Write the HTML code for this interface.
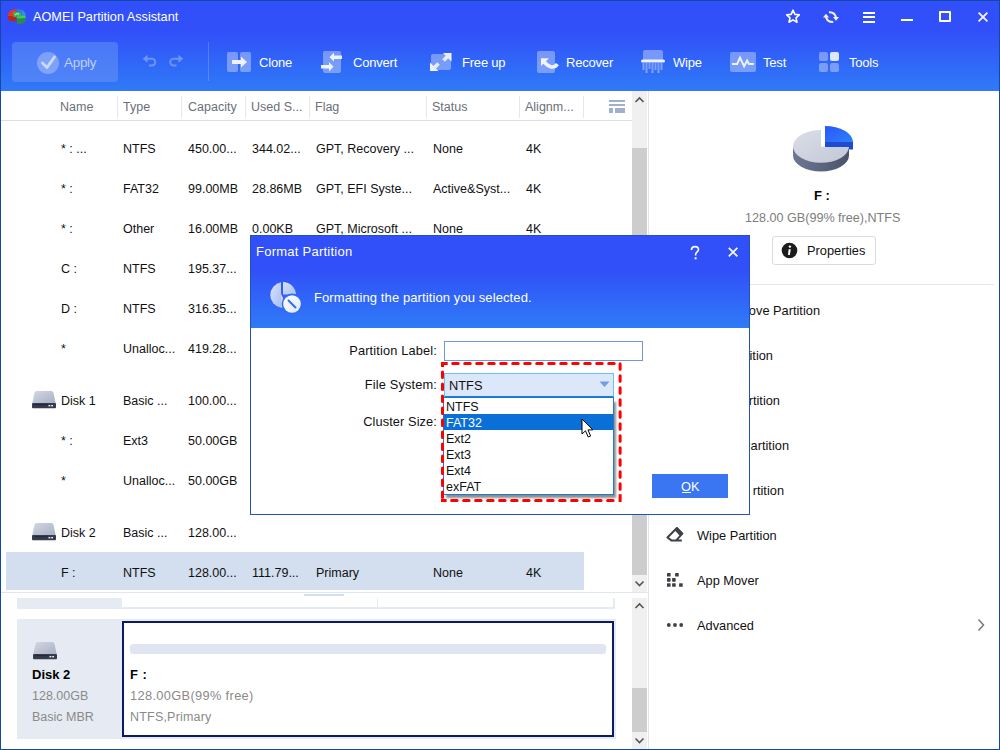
<!DOCTYPE html>
<html><head><meta charset="utf-8">
<style>
*{box-sizing:border-box;margin:0;padding:0}
html,body{width:1000px;height:750px;overflow:hidden;background:#fff}
body{font-family:"Liberation Sans",sans-serif;font-size:12px;color:#1a1a1a;position:relative}
.a{position:absolute;white-space:nowrap}
#win{position:absolute;left:0;top:0;width:1000px;height:750px;overflow:hidden}
#frame{position:absolute;left:0;top:0;width:1000px;height:750px;border:1px solid #1248a6;pointer-events:none}
#hdr{position:absolute;left:0;top:0;width:1000px;height:91px;background:linear-gradient(to bottom,#3150f9 0px,#3150f9 32px,#2f7bf7 91px)}
.tt{color:#fff;font-size:13px;letter-spacing:-0.2px}
.tbi{position:absolute}
.col{color:#6b6f7a;font-size:12.5px}
.cell{font-size:12.5px;color:#111}
.sep{position:absolute;top:96px;width:1px;height:22px;background:#e4e7ee}
</style></head>
<body>
<div id="win">
  <div id="hdr">
    <!-- app logo -->
    <svg class="a" style="left:6px;top:7px" width="22" height="20" viewBox="6 7 22 20">
      <path d="M16.5 9 C21 9 25.5 11 25.5 14.5 L25.5 19 L16.5 19 Z" fill="#2f7be2"/>
      <path d="M22 10 C24 11 25.5 12.5 25.5 14.5 L25.5 16 L22 16 Z" fill="#4a95ee" opacity="0.6"/>
      <path d="M16.5 9.2 C12 9.2 8 11.5 8 15 L8 17 L16.5 17 Z" fill="#e9342c"/>
      <path d="M8 16 L8 19.5 C9 21 12 21.6 16.5 21.2 L16.5 16 Z" fill="#b5281f"/>
      <path d="M17 16 L25.5 15.5 L25.5 21 C24 23.5 20 24.5 17 24.5 Z" fill="#2b8a4c"/>
      <path d="M17 16 L25.5 15.5 L25.5 18 L17 18.5 Z" fill="#3fcb5e"/>
      <path d="M13 12.3 L20.5 12.3 L21 16.5 L13.5 17 Z" fill="#2fbf50"/>
      <path d="M15 15 L17 13.5 L19 14.2" stroke="#d8f5dd" stroke-width="0.9" fill="none"/>
    </svg>
    <div class="a" style="left:33px;top:10px;color:#fff;font-size:12.7px;">AOMEI Partition Assistant</div>
    <!-- title bar icons -->
    <svg class="a" style="left:785px;top:9px" width="16" height="15" viewBox="0 0 16 15">
      <path d="M8 1.2 L9.9 5.4 L14.3 5.8 L11 8.8 L12 13.2 L8 10.9 L4 13.2 L5 8.8 L1.7 5.8 L6.1 5.4 Z" fill="none" stroke="#fff" stroke-width="1.6" stroke-linejoin="round"/>
    </svg>
    <svg class="a" style="left:822px;top:9px" width="18" height="16" viewBox="0 0 18 16">
      <path d="M7 3.2 Q12.8 2.8 14 8.5" fill="none" stroke="#f2f4fb" stroke-width="2"/>
      <path d="M11 8.5 Q5.2 13.2 4 8" fill="none" stroke="#f2f4fb" stroke-width="0"/>
      <path d="M11.2 13 Q5.2 13.2 4 8" fill="none" stroke="#f2f4fb" stroke-width="2"/>
      <path d="M11 8 L17 8 L14 11.8 Z" fill="#f2f4fb"/>
      <path d="M1 8.5 L7 8.5 L4 4.7 Z" fill="#f2f4fb"/>
    </svg>
    <div class="a" style="left:863px;top:11.5px;width:12px;height:2px;background:#fff"></div>
    <div class="a" style="left:863px;top:16px;width:12px;height:2px;background:#fff"></div>
    <div class="a" style="left:863px;top:20.5px;width:12px;height:2px;background:#fff"></div>
    <div class="a" style="left:901px;top:19px;width:12px;height:2px;background:#fff"></div>
    <div class="a" style="left:939px;top:11px;width:12px;height:11px;border:2px solid #fff;border-radius:1px"></div>
    <svg class="a" style="left:977px;top:11px" width="12" height="12" viewBox="0 0 12 12">
      <path d="M1.6 1.6 L10.4 10.4 M10.4 1.6 L1.6 10.4" stroke="#f4f6fc" stroke-width="1.8"/>
    </svg>
    <!-- Apply -->
    <div class="a" style="left:12px;top:42px;width:106px;height:40px;border-radius:4px;background:linear-gradient(#4a78f8,#4f84f7)"></div>
    <div class="a" style="left:37px;top:52px;width:22px;height:22px;border-radius:50%;background:rgba(255,255,255,0.28)"></div>
    <svg class="a" style="left:37px;top:52px" width="22" height="22" viewBox="0 0 22 22">
      <path d="M5.5 11 L10 15.5 L17.5 5" fill="none" stroke="#cad8fb" stroke-width="3" stroke-linecap="round" stroke-linejoin="round"/>
    </svg>
    <div class="a" style="left:64px;top:55px;color:#bfd0fa;font-size:13.5px;letter-spacing:-0.3px">Apply</div>
    <!-- undo/redo -->
    <svg class="a" style="left:141px;top:53px" width="18" height="16" viewBox="0 0 18 16">
      <path d="M6 5.8 L11 5.8 A3.3 3.3 0 0 1 11 12.4 L8 12.4" fill="none" stroke="#6b94f4" stroke-width="2"/>
      <path d="M1.6 5.8 L6.6 1.8 L6.6 9.8 Z" fill="#6b94f4"/>
    </svg>
    <svg class="a" style="left:167px;top:53px" width="18" height="16" viewBox="0 0 18 16">
      <path d="M12 5.8 L6.5 5.8 A3.3 3.3 0 0 0 6.5 12.4 L9.5 12.4" fill="none" stroke="#6b94f4" stroke-width="2"/>
      <path d="M16.2 5.8 L11.4 1.8 L11.4 9.8 Z" fill="#6b94f4"/>
    </svg>
    <div class="a" style="left:208px;top:42px;width:1px;height:39px;background:rgba(255,255,255,0.18)"></div>
    <!-- Clone -->
    <svg class="a" style="left:227px;top:52px" width="25" height="21" viewBox="0 0 25 21">
      <rect x="0" y="0" width="11" height="20" rx="2" fill="rgba(255,255,255,0.35)"/>
      <rect x="13" y="0" width="11" height="20" rx="2" fill="rgba(255,255,255,0.35)"/>
      <path d="M5 8 L14 8 L14 4.5 L20 10 L14 15.5 L14 12 L5 12 Z" fill="#eef2fc"/>
    </svg>
    <div class="a tt" style="left:259px;top:55px">Clone</div>
    <!-- Convert -->
    <svg class="a" style="left:321px;top:50px" width="22" height="24" viewBox="0 0 22 24">
      <rect x="2" y="1" width="18" height="22" rx="2" fill="rgba(255,255,255,0.35)"/>
      <path d="M21 5.5 L13 5.5 L13 2.5 L8.5 7.2 L13 11.5 L13 9 L21 9 Z" fill="#eef2fc"/>
      <path d="M0 15 L8 15 L8 12 L12.5 16.8 L8 21.5 L8 18.5 L0 18.5 Z" fill="#eef2fc"/>
    </svg>
    <div class="a tt" style="left:353px;top:55px">Convert</div>
    <!-- Free up -->
    <svg class="a" style="left:429px;top:52px" width="25" height="20" viewBox="0 0 25 20">
      <rect x="2" y="2" width="20" height="16" rx="2" fill="rgba(255,255,255,0.35)"/>
      <path d="M14 1 L22.5 1 L22.5 9.5 Z M1 19 L1 10.5 L9.5 19 Z" fill="#eef2fc"/>
      <path d="M20 3 L14.5 8.5 M4 17 L9.5 11.5" stroke="#e6ecfb" stroke-width="3.8"/>
    </svg>
    <div class="a tt" style="left:462px;top:55px">Free up</div>
    <!-- Recover -->
    <svg class="a" style="left:536px;top:50px" width="24" height="24" viewBox="0 0 24 24">
      <rect x="1" y="1" width="18" height="22" rx="2" fill="rgba(255,255,255,0.35)"/>
      <path d="M5 8.2 L13 8.2 L5 16 Z" fill="#f3f6fd"/><path d="M8 11.5 C11.5 16.5 17.5 19.5 21.5 14.2" fill="none" stroke="#eef2fc" stroke-width="3.6"/>
    </svg>
    <div class="a tt" style="left:566px;top:55px">Recover</div>
    <!-- Wipe -->
    <svg class="a" style="left:640px;top:49px" width="26" height="25" viewBox="0 0 26 25">
      <rect x="3" y="1" width="20" height="11" rx="2" fill="rgba(255,255,255,0.35)"/>
      <rect x="1" y="10.5" width="24" height="3" rx="1.5" fill="#eef2fc"/>
      <path d="M3.5 14 V21 M6.5 14 V24 M9.5 14 V20 M12.5 14 V24 M15.5 14 V21 M18.5 14 V24 M21.5 14 V21" stroke="rgba(255,255,255,0.38)" stroke-width="2"/>
    </svg>
    <div class="a tt" style="left:673px;top:55px">Wipe</div>
    <!-- Test -->
    <svg class="a" style="left:730px;top:52px" width="26" height="20" viewBox="0 0 26 20">
      <rect x="0" y="0" width="26" height="20" rx="2" fill="rgba(255,255,255,0.35)"/>
      <path d="M2 12 L7.2 12 L10 5.6 L14.1 14.2 L17.1 8.5 L19 12 L23.8 12" fill="none" stroke="#eef2fc" stroke-width="2"/>
    </svg>
    <div class="a tt" style="left:763px;top:55px">Test</div>
    <!-- Tools -->
    <svg class="a" style="left:819px;top:52px" width="21" height="21" viewBox="0 0 21 21">
      <rect x="0" y="0" width="9" height="9" rx="2" fill="rgba(255,255,255,0.35)"/>
      <rect x="11" y="0" width="9" height="9" rx="2" fill="#dfe6fb"/>
      <rect x="0" y="11" width="9" height="9" rx="2" fill="rgba(255,255,255,0.35)"/>
      <rect x="11" y="11" width="9" height="9" rx="2" fill="rgba(255,255,255,0.35)"/>
    </svg>
    <div class="a tt" style="left:849px;top:55px">Tools</div>
  </div>
  <!-- table header -->
  <div class="a col" style="left:60px;top:100px">Name</div>
  <div class="a col" style="left:123px;top:100px">Type</div>
  <div class="a col" style="left:188px;top:100px">Capacity</div>
  <div class="a col" style="left:251px;top:100px">Used S...</div>
  <div class="a col" style="left:315px;top:100px">Flag</div>
  <div class="a col" style="left:432px;top:100px">Status</div>
  <div class="a col" style="left:525px;top:100px">Alignm...</div>
  <div class="sep" style="left:117px"></div>
  <div class="sep" style="left:181px"></div>
  <div class="sep" style="left:245px"></div>
  <div class="sep" style="left:309px"></div>
  <div class="sep" style="left:426px"></div>
  <div class="sep" style="left:519px"></div>
  <div class="sep" style="left:583px"></div>
  <svg class="a" style="left:609px;top:100px" width="16" height="13" viewBox="0 0 16 13"><g fill="#a1afcb"><rect x="0" y="0" width="16" height="2"/><rect x="0" y="4" width="16" height="2"/><rect x="0" y="8" width="4" height="5"/><rect x="6" y="8" width="10" height="5"/></g></svg>
  <div class="a" style="left:1px;top:120px;width:631px;height:1px;background:#d9e0ec"></div>

<div class="a" style="left:6px;top:552px;width:578px;height:38px;background:#d3deee"></div>
<div class="a cell" style="left:61px;top:142px">* : ...</div>
<div class="a cell" style="left:123px;top:142px">NTFS</div>
<div class="a cell" style="left:188px;top:142px">450.00...</div>
<div class="a cell" style="left:252px;top:142px">344.02...</div>
<div class="a cell" style="left:316px;top:142px">GPT, Recovery ...</div>
<div class="a cell" style="left:433px;top:142px">None</div>
<div class="a cell" style="left:526px;top:142px">4K</div>
<div class="a cell" style="left:61px;top:182px">* :</div>
<div class="a cell" style="left:123px;top:182px">FAT32</div>
<div class="a cell" style="left:188px;top:182px">99.00MB</div>
<div class="a cell" style="left:252px;top:182px">28.86MB</div>
<div class="a cell" style="left:316px;top:182px">GPT, EFI Syste...</div>
<div class="a cell" style="left:433px;top:182px">Active&amp;Syst...</div>
<div class="a cell" style="left:526px;top:182px">4K</div>
<div class="a cell" style="left:61px;top:222px">* :</div>
<div class="a cell" style="left:123px;top:222px">Other</div>
<div class="a cell" style="left:188px;top:222px">16.00MB</div>
<div class="a cell" style="left:252px;top:222px">0.00KB</div>
<div class="a cell" style="left:316px;top:222px">GPT, Microsoft ...</div>
<div class="a cell" style="left:433px;top:222px">None</div>
<div class="a cell" style="left:526px;top:222px">4K</div>
<div class="a cell" style="left:61px;top:262px">C :</div>
<div class="a cell" style="left:123px;top:262px">NTFS</div>
<div class="a cell" style="left:188px;top:262px">195.37...</div>
<div class="a cell" style="left:61px;top:302px">D :</div>
<div class="a cell" style="left:123px;top:302px">NTFS</div>
<div class="a cell" style="left:188px;top:302px">316.35...</div>
<div class="a cell" style="left:61px;top:342px">*</div>
<div class="a cell" style="left:123px;top:342px">Unalloc...</div>
<div class="a cell" style="left:188px;top:342px">419.28...</div>
<div class="a cell" style="left:61px;top:394px">Disk 1</div>
<div class="a cell" style="left:123px;top:394px">Basic ...</div>
<div class="a cell" style="left:188px;top:394px">100.00...</div>
<svg class="a" style="left:32px;top:391px" width="24" height="18" viewBox="0 0 24 18"><defs><linearGradient id="dg400" x1="0" y1="0" x2="1" y2="1"><stop offset="0" stop-color="#d3d8e4"/><stop offset="1" stop-color="#a7afc2"/></linearGradient></defs><path d="M2.6 1.6 Q3 0 4.6 0 L19.4 0 Q21 0 21.4 1.6 L23.8 12.5 L0.2 12.5 Z" fill="url(#dg400)"/><rect x="0" y="12" width="24" height="5.2" rx="1" fill="#363b4e"/><rect x="2.5" y="13.2" width="13" height="1" fill="#22263a"/><rect x="16.5" y="14" width="1.8" height="1.4" fill="#e8ecf5"/><rect x="19.2" y="14" width="1.8" height="1.4" fill="#e8ecf5"/></svg>
<div class="a cell" style="left:61px;top:434px">* :</div>
<div class="a cell" style="left:123px;top:434px">Ext3</div>
<div class="a cell" style="left:188px;top:434px">50.00GB</div>
<div class="a cell" style="left:61px;top:474px">*</div>
<div class="a cell" style="left:123px;top:474px">Unalloc...</div>
<div class="a cell" style="left:188px;top:474px">50.00GB</div>
<div class="a cell" style="left:61px;top:526px">Disk 2</div>
<div class="a cell" style="left:123px;top:526px">Basic ...</div>
<div class="a cell" style="left:188px;top:526px">128.00...</div>
<svg class="a" style="left:32px;top:523px" width="24" height="18" viewBox="0 0 24 18"><defs><linearGradient id="dg532" x1="0" y1="0" x2="1" y2="1"><stop offset="0" stop-color="#d3d8e4"/><stop offset="1" stop-color="#a7afc2"/></linearGradient></defs><path d="M2.6 1.6 Q3 0 4.6 0 L19.4 0 Q21 0 21.4 1.6 L23.8 12.5 L0.2 12.5 Z" fill="url(#dg532)"/><rect x="0" y="12" width="24" height="5.2" rx="1" fill="#363b4e"/><rect x="2.5" y="13.2" width="13" height="1" fill="#22263a"/><rect x="16.5" y="14" width="1.8" height="1.4" fill="#e8ecf5"/><rect x="19.2" y="14" width="1.8" height="1.4" fill="#e8ecf5"/></svg>
<div class="a cell" style="left:61px;top:566px">F :</div>
<div class="a cell" style="left:123px;top:566px">NTFS</div>
<div class="a cell" style="left:188px;top:566px">128.00...</div>
<div class="a cell" style="left:252px;top:566px">111.79...</div>
<div class="a cell" style="left:316px;top:566px">Primary</div>
<div class="a cell" style="left:433px;top:566px">None</div>
<div class="a cell" style="left:526px;top:566px">4K</div>
  <!-- upper scrollbar -->
  <div class="a" style="left:632px;top:91px;width:15px;height:501px;background:#f0f0f0"></div>
  <svg class="a" style="left:632px;top:92px" width="15" height="16" viewBox="0 0 15 16"><path d="M3.5 10 L7.5 6 L11.5 10" fill="none" stroke="#555" stroke-width="1.6"/></svg>
  <div class="a" style="left:632px;top:148px;width:15px;height:427px;background:#cdcdcd"></div>
  <svg class="a" style="left:632px;top:575px" width="15" height="17" viewBox="0 0 15 17"><path d="M3.5 6.5 L7.5 10.5 L11.5 6.5" fill="none" stroke="#555" stroke-width="1.6"/></svg>
  <div class="a" style="left:648px;top:91px;width:1px;height:659px;background:#dfe6f0"></div>
  <div class="a" style="left:1px;top:592px;width:647px;height:1px;background:#dfe6f0"></div>
  <!-- lower pane -->
  <div class="a" style="left:304px;top:594px;width:40px;height:2px;background:#d5e0ee"></div>
  <div class="a" style="left:17px;top:598px;width:105px;height:11px;background:#e6eaf2"></div>
  <div class="a" style="left:122px;top:607px;width:493px;height:2px;background:#e6eaf2"></div>
  <div class="a" style="left:377px;top:598px;width:1px;height:10px;background:#e6eaf2"></div>
  <div class="a" style="left:613px;top:598px;width:2px;height:10px;background:#e6eaf2"></div>
  <div class="a" style="left:632px;top:598px;width:15px;height:151px;background:#f0f0f0"></div>
  <svg class="a" style="left:632px;top:598px" width="15" height="16" viewBox="0 0 15 16"><path d="M3.5 10 L7.5 6 L11.5 10" fill="none" stroke="#555" stroke-width="1.6"/></svg>
  <div class="a" style="left:632px;top:688px;width:15px;height:44px;background:#cdcdcd"></div>
  <svg class="a" style="left:632px;top:732px" width="15" height="17" viewBox="0 0 15 17"><path d="M3.5 6.5 L7.5 10.5 L11.5 6.5" fill="none" stroke="#555" stroke-width="1.6"/></svg>
  <div class="a" style="left:17px;top:619px;width:599px;height:120px;background:#e6eaf2"></div>
  <div class="a" style="left:122px;top:621px;width:492px;height:116px;background:#fff;border:2px solid #0c1a66"></div>
  <div class="a" style="left:130px;top:644px;width:476px;height:10px;background:#dfe6f1;border-radius:3px"></div>
  <svg class="a" style="left:33px;top:642px" width="24" height="18" viewBox="0 0 24 18"><defs><linearGradient id="dgl" x1="0" y1="0" x2="1" y2="1"><stop offset="0" stop-color="#d3d8e4"/><stop offset="1" stop-color="#a7afc2"/></linearGradient></defs><path d="M2.6 1.6 Q3 0 4.6 0 L19.4 0 Q21 0 21.4 1.6 L23.8 12.5 L0.2 12.5 Z" fill="url(#dgl)"/><rect x="0" y="12" width="24" height="5.2" rx="1" fill="#363b4e"/><rect x="2.5" y="13.2" width="13" height="1" fill="#22263a"/><rect x="16.5" y="14" width="1.8" height="1.4" fill="#e8ecf5"/><rect x="19.2" y="14" width="1.8" height="1.4" fill="#e8ecf5"/></svg>
  <div class="a" style="left:32px;top:667px;font-size:13px;font-weight:bold;color:#000">Disk 2</div>
  <div class="a" style="left:32px;top:689px;font-size:12.5px;color:#8a8a8a">128.00GB</div>
  <div class="a" style="left:32px;top:710px;font-size:12.5px;color:#8a8a8a">Basic MBR</div>
  <div class="a" style="left:130px;top:667px;font-size:13px;font-weight:bold;color:#000;word-spacing:1px">F :</div>
  <div class="a" style="left:130px;top:688px;font-size:12.8px;color:#8a8a8a;letter-spacing:0.35px">128.00GB(99% free)</div>
  <div class="a" style="left:130px;top:710px;font-size:12.5px;color:#8a8a8a;letter-spacing:0.2px">NTFS,Primary</div>
  <!-- right panel -->
  <svg class="a" style="left:785px;top:118px" width="75" height="60" viewBox="785 118 75 60">
    <defs>
      <linearGradient id="pt" x1="0" y1="0" x2="1" y2="1"><stop offset="0" stop-color="#dadee8"/><stop offset="1" stop-color="#c2c8d6"/></linearGradient>
      <linearGradient id="ps" x1="0" y1="0" x2="1" y2="0"><stop offset="0" stop-color="#6e7893"/><stop offset="1" stop-color="#4b536b"/></linearGradient>
      <linearGradient id="pb" x1="0" y1="0" x2="1" y2="1"><stop offset="0" stop-color="#2b55fa"/><stop offset="1" stop-color="#2d82f8"/></linearGradient>
    </defs>
    <path d="M793 147.5 L793 155.4 A28 16.2 0 0 0 849 155.4 L849 147.5 Z" fill="url(#ps)"/>
    <path d="M821 146.8 L821 130 A28 16.4 0 1 0 849 146.8 Z" fill="url(#pt)"/>
    <path d="M825 142 L853 142 L853 149.6 L849 149.6 L849 147 L825 147 Z" fill="#1f4bd3"/>
    <path d="M825 142 L825 126 A28 16 0 0 1 853 142 Z" fill="url(#pb)"/>
  </svg>
  <div class="a" style="left:814px;top:188px;font-size:13px;font-weight:bold;color:#000">F :</div>
  <div class="a" style="left:745px;top:211px;font-size:12.6px;color:#7d7d7d">128.00 GB(99% free),NTFS</div>
  <div class="a" style="left:772px;top:236px;width:104px;height:29px;border:1px solid #d7dce6;border-radius:3px;background:#fff"></div>
  <svg class="a" style="left:781px;top:242px" width="17" height="17" viewBox="0 0 17 17"><circle cx="8.5" cy="8.5" r="7.8" fill="#1b1b1b"/><circle cx="8.9" cy="4.6" r="1.2" fill="#fff"/><path d="M7.6 7.3 L9.8 7.3 L8.9 13 L7 13 Z" fill="#fff"/></svg>
  <div class="a" style="left:807px;top:243px;font-size:12.8px;color:#111">Properties</div>
  <div class="a" style="left:649px;top:284px;width:345px;height:1px;background:#e2e7ef"></div>
  <div class="a" style="right:180px;top:303px;font-size:12.8px;color:#111">Resize/Move Partition</div>
  <div class="a" style="right:227px;top:348px;font-size:12.8px;color:#111">Split Partition</div>
  <div class="a" style="right:220px;top:393px;font-size:12.8px;color:#111">Merge Partition</div>
  <div class="a" style="right:211px;top:438px;font-size:12.8px;color:#111">Clone Partition</div>
  <div class="a" style="right:216px;top:483px;font-size:12.8px;color:#111">rtition</div>
  <svg class="a" style="left:662px;top:522px" width="28" height="24" viewBox="662 522 28 24"><path d="M671.8 540.6 L667.4 537.5 L676.9 528 L682.3 533.7 L676 540.6 M670.5 540.6 L681.8 540.6" fill="none" stroke="#3d4047" stroke-width="2" stroke-linejoin="round"/><path d="M676.9 527 L683.4 533.6 L680.2 536.2 L674.5 530 Z" fill="#3d4047"/></svg>
  <div class="a" style="left:697px;top:528px;font-size:12.8px;color:#111">Wipe Partition</div>
  <svg class="a" style="left:666px;top:572px" width="18" height="18" viewBox="0 0 18 18" fill="#3d4047">
    <rect x="1" y="1" width="3.6" height="3.6" rx="0.6"/><rect x="9.1" y="1" width="3.6" height="3.6" rx="0.6"/>
    <rect x="1" y="6.1" width="3.6" height="3.6" rx="0.6"/><rect x="6.1" y="6.1" width="3.6" height="3.6" rx="0.6"/>
    <rect x="1" y="11.2" width="3.6" height="3.6" rx="0.6"/><rect x="6.1" y="11.2" width="3.6" height="3.6" rx="0.6"/><rect x="13.1" y="11.2" width="3.6" height="3.6" rx="0.6"/>
  </svg>
  <div class="a" style="left:697px;top:573px;font-size:12.8px;color:#111">App Mover</div>
  <svg class="a" style="left:666px;top:621px" width="18" height="8" viewBox="0 0 18 8" fill="#3d4047"><circle cx="2.8" cy="4" r="1.9"/><circle cx="9" cy="4" r="1.9"/><circle cx="15.2" cy="4" r="1.9"/></svg>
  <div class="a" style="left:697px;top:618px;font-size:12.8px;color:#111">Advanced</div>
  <svg class="a" style="left:976px;top:618px" width="10" height="14" viewBox="0 0 10 14"><path d="M2.5 1.5 L7.5 7 L2.5 12.5" fill="none" stroke="#777" stroke-width="1.5"/></svg>
  <!-- dialog -->
  <div class="a" style="left:250px;top:235px;width:500px;height:280px;background:#fff;border:1px solid #2352b8"></div>
  <div class="a" style="left:251px;top:236px;width:498px;height:92px;background:linear-gradient(to bottom,#3150f9 0px,#3150f9 34px,#2f7bf7 92px)"></div>
  <div class="a" style="left:256px;top:244px;font-size:13px;letter-spacing:0.25px;color:#fff">Format Partition</div>
  <svg class="a" style="left:687px;top:245px" width="16" height="16" viewBox="0 0 16 16"><path d="M4.5 5 C4.5 2.5 6.2 1.6 8 1.6 C10 1.6 11.5 2.8 11.5 4.6 C11.5 6.8 8.6 7 8.6 9.6 L8.6 10.5" fill="none" stroke="#fff" stroke-width="1.6"/><rect x="7.6" y="12.3" width="2" height="2" fill="#fff"/></svg>
  <svg class="a" style="left:727px;top:246px" width="12" height="12" viewBox="0 0 12 12"><path d="M1.8 1.8 L10.4 10.4 M10.4 1.8 L1.8 10.4" stroke="#f4f6fc" stroke-width="1.8"/></svg>
  <svg class="a" style="left:265px;top:278px" width="40" height="40" viewBox="265 278 40 40">
    <defs><linearGradient id="ic1" x1="0" y1="0" x2="1" y2="1"><stop offset="0" stop-color="#d9e2fb"/><stop offset="1" stop-color="#a8bff5"/></linearGradient>
    <linearGradient id="ic2" x1="0" y1="0" x2="1" y2="1"><stop offset="0" stop-color="#ffffff"/><stop offset="1" stop-color="#dde7fb"/></linearGradient></defs>
    <path d="M281 282.2 A13 13 0 0 0 281 307.8 Z" fill="url(#ic1)"/>
    <path d="M283 282 A13 13 0 0 1 296 294.5 L283 294.5 Z" fill="url(#ic1)"/>
    <path d="M281 294 L281 307.8 A13 13 0 0 0 287 306 Z" fill="url(#ic1)"/>
    <circle cx="292" cy="304" r="10.4" fill="#2f6cf6"/>
    <circle cx="292" cy="304" r="8.8" fill="url(#ic2)"/>
    <path d="M288 300 L296 308" stroke="#2f6cf0" stroke-width="2"/>
  </svg>
  <div class="a" style="left:314px;top:290px;font-size:13px;letter-spacing:0.1px;color:#fff">Formatting the partition you selected.</div>
  <div class="a" style="right:563px;top:343px;font-size:12.8px;letter-spacing:0.15px;color:#111">Partition Label:</div>
  <div class="a" style="left:444px;top:341px;width:199px;height:20px;border:1px solid #7097d8;background:#fff"></div>
  <div class="a" style="right:563px;top:377px;font-size:12.8px;letter-spacing:0.15px;color:#111">File System:</div>
  <div class="a" style="left:444px;top:373px;width:170px;height:25px;background:#dce8fa;border:1px solid #69c3f6;border-bottom:2px solid #1a7ad6"></div>
  <div class="a" style="left:449px;top:378px;font-size:12.8px;color:#111">NTFS</div>
  <svg class="a" style="left:599px;top:381px" width="11" height="7" viewBox="0 0 11 7"><path d="M0.5 0.5 L10.5 0.5 L5.5 6 Z" fill="#6f9ce2"/></svg>
  <div class="a" style="right:563px;top:414px;font-size:12.8px;letter-spacing:0.1px;color:#111">Cluster Size:</div>
  <!-- dropdown -->
  <div class="a" style="left:446px;top:402px;width:170px;height:96px;background:rgba(0,0,0,0.45);filter:blur(1px)"></div>
  <div class="a" style="left:443px;top:397px;width:171px;height:98px;background:#fff;border:1px solid #1a7ad6"></div>
  <div class="a" style="left:444px;top:414px;width:169px;height:16px;background:#0b6fd8"></div>
  <div class="a" style="left:446px;top:399px;font-size:12.5px;line-height:16px;color:#111">NTFS</div>
  <div class="a" style="left:446px;top:415px;font-size:12.5px;line-height:16px;color:#fff">FAT32</div>
  <div class="a" style="left:446px;top:431px;font-size:12.5px;line-height:16px;color:#111">Ext2</div>
  <div class="a" style="left:446px;top:447px;font-size:12.5px;line-height:16px;color:#111">Ext3</div>
  <div class="a" style="left:446px;top:463px;font-size:12.5px;line-height:16px;color:#111">Ext4</div>
  <div class="a" style="left:446px;top:479px;font-size:12.5px;line-height:16px;color:#111">exFAT</div>
  <!-- red dashed -->
  <svg class="a" style="left:436px;top:356px" width="192" height="152" viewBox="436 356 192 152">
    <path d="M452.70 363.50 H458.20 M464.70 363.50 H470.20 M476.70 363.50 H482.20 M488.70 363.50 H494.20 M500.70 363.50 H506.20 M512.70 363.50 H518.20 M524.70 363.50 H530.20 M536.70 363.50 H542.20 M548.70 363.50 H554.20 M560.70 363.50 H566.20 M572.70 363.50 H578.20 M584.70 363.50 H590.20 M596.70 363.50 H602.20 M608.70 363.50 H614.20 M620.10 363.70 V369.20 M620.10 375.70 V381.20 M620.10 387.70 V393.20 M620.10 399.70 V405.20 M620.10 411.70 V417.20 M620.10 423.70 V429.20 M620.10 435.70 V441.20 M620.10 447.70 V453.20 M620.10 459.70 V465.20 M620.10 471.70 V477.20 M620.10 483.70 V489.20 M451.60 500.50 H457.10 M463.60 500.50 H469.10 M475.60 500.50 H481.10 M487.60 500.50 H493.10 M499.60 500.50 H505.10 M511.60 500.50 H517.10 M523.60 500.50 H529.10 M535.60 500.50 H541.10 M547.60 500.50 H553.10 M559.60 500.50 H565.10 M571.60 500.50 H577.10 M583.60 500.50 H589.10 M595.60 500.50 H601.10 M607.60 500.50 H613.10 M442.50 372.00 V377.50 M442.50 384.00 V389.50 M442.50 396.00 V401.50 M442.50 408.00 V413.50 M442.50 420.00 V425.50 M442.50 432.00 V437.50 M442.50 444.00 V449.50 M442.50 456.00 V461.50 M442.50 468.00 V473.50 M442.50 480.00 V485.50 M442.50 492.00 V497.50" fill="none" stroke="#ff0000" stroke-width="3" stroke-linecap="round"/>
    <g fill="#ff0000"><rect x="441.00" y="362.00" width="6.70" height="3"/><rect x="618.60" y="494.20" width="3" height="7.80"/><rect x="441.00" y="499.00" width="5.60" height="3"/><rect x="441.00" y="362.00" width="3" height="5.00"/></g>
  </svg>
  <!-- cursor -->
  <svg class="a" style="left:581px;top:418px" width="14" height="21" viewBox="0 0 14 21"><path d="M1 1 L1 16 L4.5 12.8 L7.2 19 L9.6 18 L7 11.9 L11.8 11.9 Z" fill="#fff" stroke="#000" stroke-width="1" stroke-linejoin="round"/></svg>
  <!-- OK -->
  <div class="a" style="left:652px;top:474px;width:76px;height:24px;background:#3a75f2"></div>
  <div class="a" style="left:681px;top:479px;font-size:12.8px;color:#fff">OK</div><div class="a" style="left:682px;top:492px;width:9px;height:1px;background:#fff"></div>
</div>
<div id="frame"></div>
</body></html>
